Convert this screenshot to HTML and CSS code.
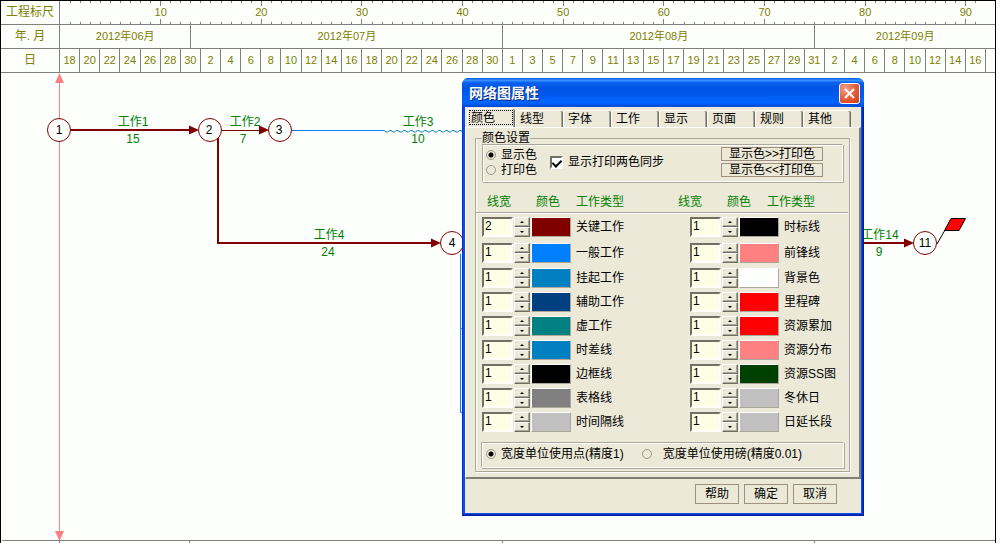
FILE: index.html
```html
<!DOCTYPE html>
<html lang="zh-CN">
<head>
<meta charset="utf-8">
<title>网络图属性</title>
<link rel="stylesheet" href="styles.css">
</head>
<body>
<main class="sheet">
  <header class="scale">
    <div class="scale-name">工程标尺</div>
    <svg class="ruler" id="ruler" role="img" aria-label="工程标尺"></svg>
    <div class="scale-name">年. 月</div>
    <div class="months"><span>2012年06月</span><span>2012年07月</span><span>2012年08月</span><span>2012年09月</span></div>
    <div class="scale-name">日</div>
    <div class="days" id="days"></div>
  </header>

  <svg class="network" width="994" height="467" viewBox="1 73 994 467">
    <g class="front-line">
      <path d="M59.5 80V533"/>
      <path class="front-head" d="M59.5 73L64 83H55zM59.5 541L55 531H64z"/>
    </g>
    <path class="link" d="M292 130.500H384M460.500 254V412.500H464M460.500 328.500H464"/>
    <path class="slack" id="slack"/>
    <g class="critical">
      <path d="M71 130H190M218 138V243H432M860 243H906"/>
      <path class="thin" d="M222 130.500H262"/>
      <path class="head" d="M189 125.500L199 130L189 134.500zM259 125.500L269 130L259 134.500zM431 238.500L441 243L431 247.500zM904 238.500L914 243L904 247.500z"/>
    </g>
    <g class="milestone">
      <path d="M937 244L945 230"/>
      <path class="flag" d="M951 218.500H965.500L959 230.500H944.500z"/>
    </g>
    <g class="node">
      <circle cx="59" cy="130" r="11.500"/><circle cx="210" cy="130" r="11.500"/><circle cx="280" cy="130" r="11.500"/><circle cx="452" cy="243" r="11.500"/><circle cx="925" cy="243" r="11.500"/>
      <text x="59" y="134">1</text><text x="209" y="134">2</text><text x="279" y="134">3</text><text x="452" y="247">4</text><text x="925" y="247">11</text>
    </g>
    <g class="task">
      <text x="133" y="126">工作1</text><text x="133" y="143">15</text>
      <text x="245" y="126">工作2</text><text x="243" y="143">7</text>
      <text x="418" y="126">工作3</text><text x="418" y="143">10</text>
      <text x="329" y="239">工作4</text><text x="328" y="256">24</text>
      <text x="880" y="239">工作14</text><text x="879" y="256">9</text>
    </g>
  </svg>
  <div class="months scale-foot"><span></span><span></span><span></span><span></span></div>
</main>

<section class="dialog" role="dialog" aria-labelledby="dialog-title">
  <div class="titlebar">
    <h1 id="dialog-title">网络图属性</h1>
    <button class="close" type="button" aria-label="关闭"><svg width="11" height="11" viewBox="0 0 11 11"><path d="M1 1L10 10M10 1L1 10"/></svg></button>
  </div>
  <form class="body">
    <div class="tabs" role="tablist">
      <button type="button" role="tab" class="tab active" aria-selected="true">颜色</button>
      <button type="button" role="tab" class="tab">线型</button>
      <button type="button" role="tab" class="tab">字体</button>
      <button type="button" role="tab" class="tab">工作</button>
      <button type="button" role="tab" class="tab">显示</button>
      <button type="button" role="tab" class="tab">页面</button>
      <button type="button" role="tab" class="tab">规则</button>
      <button type="button" role="tab" class="tab">其他</button>
    </div>
    <div class="panel">
      <fieldset class="group">
        <legend>颜色设置</legend>
        <div class="box modes">
          <div class="stack">
            <label><input type="radio" name="mode" checked>显示色</label>
            <label><input type="radio" name="mode">打印色</label>
          </div>
          <label class="sync"><input type="checkbox" checked>显示打印两色同步</label>
          <div class="copy">
            <button type="button" class="flat">显示色&gt;&gt;打印色</button>
            <button type="button" class="flat">显示色&lt;&lt;打印色</button>
          </div>
        </div>
        <div class="heads">
          <div class="head-set"><span>线宽</span><span>颜色</span><span>工作类型</span></div>
          <div class="head-set"><span>线宽</span><span>颜色</span><span>工作类型</span></div>
        </div>
        <div class="lists">
          <div class="list" id="work-lines"></div>
          <div class="list" id="other-lines"></div>
        </div>
        <div class="box units">
          <label><input type="radio" name="unit" checked>宽度单位使用点(精度1)</label>
          <label><input type="radio" name="unit">宽度单位使用磅(精度0.01)</label>
        </div>
      </fieldset>
    </div>
    <div class="actions">
      <button type="button" class="flat">帮助</button>
      <button type="button" class="flat">确定</button>
      <button type="button" class="flat">取消</button>
    </div>
  </form>
</section>
<script src="app.js"></script>
</body>
</html>
```
FILE: styles.css
```css
* { box-sizing: border-box; }

body {
  margin: 0;
  background: #fcfffc;
  font: 12px/14px "Liberation Sans", "Noto Sans CJK SC", sans-serif;
  color: #000;
}

button, input {
  font: inherit;
  color: inherit;
  margin: 0;
  padding: 0;
}

.sheet {
  min-height: 100vh;
  margin-right: 4px;
  border: solid #000;
  border-width: 1px 1px 0 1px;
  display: flex;
  flex-direction: column;
  overflow: hidden;
}

/* time scale */
.scale {
  display: grid;
  grid-template-columns: 59px 1fr;
  grid-auto-rows: 24px;
  color: #808000;
}

.scale > * { border-bottom: 1px solid #808080; }

.scale-name {
  border-right: 1px solid #808080;
  line-height: 22px;
  text-align: center;
}

.ruler {
  width: 100%;
  height: 24px;
  shape-rendering: crispEdges;
}

.ruler line { stroke: #808080; }

.ruler text {
  fill: #808000;
  text-anchor: middle;
  font-size: 11px;
}

.months {
  display: grid;
  grid-template-columns: 1295fr 3100fr 3100fr 1795fr;
  font-size: 11px;
  line-height: 23px;
  text-align: center;
}

.months span + span { border-left: 1px solid #808080; }

.days {
  display: grid;
  grid-template-columns: repeat(46, 200fr) 90fr;
  font-size: 11px;
  line-height: 23px;
  text-align: center;
}

.days span { border-right: 1px solid #808080; }
.days span:last-child { border-right: 0; }

.scale-foot {
  flex: 1;
  margin-left: 58px;
  border-top: 1px solid #808080;
  box-shadow: -58px -1px 0 -1px #808080;
}

.scale-foot span { border-left: 1px solid #808080; }

/* network drawing */
.network {
  display: block;
  flex: none;
}

.network path, .network circle { fill: none; }
.network text { text-anchor: middle; }
.network .front-line path { stroke: #ff8080; }
.network .front-line .front-head { fill: #ff8080; stroke: none; }
.network .link { stroke: #0080ff; }
.network .slack { stroke: #0080c0; }
.network .critical path { stroke: #800000; stroke-width: 2; }
.network .critical .thin { stroke-width: 1; }
.network .critical .head { fill: #800000; stroke: none; }
.network .milestone path { stroke: #000; }
.network .milestone .flag { fill: #f00; }
.network .node circle { fill: #fcfffc; stroke: #800000; }
.network .task text { fill: #008000; }

/* dialog */
.dialog {
  position: absolute;
  left: 462px;
  top: 78px;
  width: 402px;
  padding: 0 3px 3px;
  border-radius: 7px 7px 0 0;
  background: #0a4ee4;
  box-shadow: inset 1px 0 0 #0030c8, inset -1px -1px 0 #001ea0, inset -2px -2px 0 #0030c8;
}

.titlebar {
  height: 29px;
  margin: 0 -3px;
  padding: 1px 4px 0 7px;
  display: flex;
  align-items: center;
  justify-content: space-between;
  border-radius: 7px 7px 0 0;
  background: linear-gradient(#0058e6, #3a93ff 8%, #0860ee 16%, #0054e3 35%, #0058ee 55%, #0066ff 85%, #0048d0);
}

.titlebar h1 {
  margin: 0;
  font-size: 14px;
  line-height: 18px;
  color: #fff;
  text-shadow: 1px 1px 0 #0a2a80;
}

.close {
  display: grid;
  place-items: center;
  width: 21px;
  height: 21px;
  border: 1px solid #fff;
  border-radius: 3px;
  background: radial-gradient(circle at 30% 25%, #f0a088, #e25c36 55%, #c83c10);
}

.close path {
  stroke: #fff;
  stroke-width: 2;
}

.body {
  padding-top: 3px;
  background: #ece9d8;
}

.tabs {
  display: flex;
  height: 17px;
  padding-left: 2px;
}

.tab {
  flex: 0 0 48px;
  padding-left: 4px;
  border: solid #fff;
  border-width: 1px 0 0 1px;
  border-radius: 2px 2px 0 0;
  box-shadow: inset -1px 0 0 #716f64, inset -2px 0 0 #aca899;
  background: #ece9d8;
  line-height: 14px;
  text-align: left;
}

.tab.active {
  height: 19px;
  margin-top: -2px;
  padding-left: 3px;
  outline: 1px dotted #000;
  outline-offset: -3px;
}

.panel {
  padding: 4px 9px 5px;
  border: solid;
  border-width: 1px 2px 2px 1px;
  border-color: #fff #808076 #808076 #fff;
}

.group {
  min-width: 0;
  margin: 0;
  padding: 0;
  border: 1px solid #aca899;
  box-shadow: 1px 1px 0 #fff, inset 1px 0 0 #fff;
}

.group legend {
  margin-left: 6px;
  padding: 0;
  line-height: 12px;
}

.box {
  margin: 0 6px;
  border: 1px solid;
  border-color: #aca899 #fff #fff #aca899;
  box-shadow: inset 1px 1px 0 #fff, 1px 1px 0 #aca899;
}

.box label {
  display: flex;
  align-items: center;
  white-space: nowrap;
}

.modes {
  display: flex;
  align-items: center;
  height: 38px;
  padding: 0 19px 2px 3px;
}

.stack label {
  height: 15px;
  gap: 5px;
}

.sync {
  gap: 5px;
  margin-left: 13px;
}

.copy {
  display: grid;
  gap: 2px;
  width: 102px;
  margin-left: auto;
}

input[type="radio"] {
  appearance: none;
  width: 10px;
  height: 10px;
  border: 1px solid #a09888;
  border-radius: 50%;
}

input[type="radio"]:checked { background: radial-gradient(circle, #000 2px, transparent 3px); }

input[type="checkbox"] {
  appearance: none;
  width: 13px;
  height: 13px;
  border: 2px solid;
  border-color: #716f64 #fff #fff #716f64;
  background: #fff;
  display: grid;
  place-items: center;
}

input[type="checkbox"]:checked::after {
  content: "";
  width: 4px;
  height: 7px;
  border: solid #000;
  border-width: 0 2px 2px 0;
  transform: rotate(45deg);
}

.flat {
  height: 14px;
  border: 1px solid #a09080;
  background: #ece9d8;
  line-height: 12px;
  white-space: nowrap;
}

.heads {
  display: grid;
  grid-template-columns: 191px 1fr;
  margin-right: 1px;
  padding: 12px 0 2px 11px;
  border-bottom: 1px solid #aca899;
  box-shadow: 0 1px 0 #fff;
  color: #008000;
  line-height: 16px;
}

.head-set {
  display: grid;
  grid-template-columns: 49px 40px 1fr;
}

.lists {
  display: grid;
  grid-template-columns: 208px 1fr;
  padding: 1px 0 0 6px;
}

.list {
  display: grid;
  grid-template-rows: 26px 26px;
  grid-auto-rows: 24px;
}

.line {
  display: grid;
  grid-template-columns: 31px 16px 40px 1fr;
  align-items: center;
  column-gap: 1px;
}

.line .width {
  width: 100%;
  height: 20px;
  padding: 0 0 2px 1px;
  border: 2px solid;
  border-color: #716f64 #fff #fff #716f64;
  border-radius: 0;
  background: #fcffe4;
}

.spin {
  display: grid;
  grid-template-rows: 10px 10px;
}

.spin button {
  display: grid;
  place-items: center;
  border: 1px solid;
  border-color: #fff #716f64 #716f64 #fff;
  box-shadow: inset -1px -1px 0 #aca899;
  background: #ece9d8;
}

.spin svg { display: block; }

.swatch {
  width: 40px;
  height: 20px;
  border: 1px solid;
  border-color: #fff #aca899 #aca899 #fff;
}

.line label {
  padding-left: 4px;
  white-space: nowrap;
}

.units {
  display: flex;
  align-items: center;
  gap: 18px;
  height: 26px;
  margin: 8px 5px 3px;
  padding: 0 0 2px 4px;
}

.units label { gap: 5px; }
.units label + label { gap: 11px; }

.actions {
  display: flex;
  justify-content: flex-end;
  gap: 5px;
  padding: 5px 24px 9px;
}

.actions .flat {
  width: 44px;
  height: 20px;
  line-height: 18px;
}
```
FILE: app.js
```js
const svgNS = "http://www.w3.org/2000/svg";
const DAYS = 92.9;

// Ruler: one tick a day on both edges, a longer one with a number every ten days.
const ruler = document.getElementById("ruler");
for (let day = 1; day <= 91; day++) {
  const x = (day / DAYS * 100) + "%";
  const size = day % 10 ? 2 : 5;
  for (const [y1, y2] of [[0, size], [23 - size, 23]]) {
    const tick = document.createElementNS(svgNS, "line");
    tick.setAttribute("x1", x);
    tick.setAttribute("x2", x);
    tick.setAttribute("y1", y1);
    tick.setAttribute("y2", y2);
    ruler.append(tick);
  }
  if (day % 10 === 0) {
    const label = document.createElementNS(svgNS, "text");
    label.setAttribute("x", x);
    label.setAttribute("y", 15);
    label.textContent = day;
    ruler.append(label);
  }
}

// Every second date from 18 June to 16 September.
const days = document.getElementById("days");
for (const [first, last] of [[18, 30], [2, 30], [1, 31], [2, 16]]) {
  for (let d = first; d <= last; d += 2) {
    const cell = document.createElement("span");
    cell.textContent = d;
    days.append(cell);
  }
}
days.append(document.createElement("span"));

// Wavy line for free float.
let wave = "M384 130.5";
for (let x = 384; x < 464; x += 7) wave += "l2 1.5h1.5l2 -1.5h1.5";
document.getElementById("slack").setAttribute("d", wave);

const workLines = [
  ["关键工作", 2, "#800000"], ["一般工作", 1, "#0080ff"], ["挂起工作", 1, "#0080c0"],
  ["辅助工作", 1, "#004080"], ["虚工作", 1, "#008080"], ["时差线", 1, "#0080c0"],
  ["边框线", 1, "#000000"], ["表格线", 1, "#808080"], ["时间隔线", 1, "#c0c0c0"]
];
const otherLines = [
  ["时标线", 1, "#000000"], ["前锋线", 1, "#ff8080"], ["背景色", 1, "#fcfffc"],
  ["里程碑", 1, "#ff0000"], ["资源累加", 1, "#ff0000"], ["资源分布", 1, "#ff8080"],
  ["资源SS图", 1, "#004000"], ["冬休日", 1, "#c0c0c0"], ["日延长段", 1, "#c0c0c0"]
];

function fill(listId, rows) {
  document.getElementById(listId).innerHTML = rows.map(([name, width, color], i) => `
    <div class="line">
      <input class="width" type="text" id="${listId}-${i}" value="${width}">
      <span class="spin">
        <button type="button" aria-label="增加"><svg width="4" height="2" viewBox="0 0 4 2"><path d="M0 2L2 0L4 2z"/></svg></button>
        <button type="button" aria-label="减少"><svg width="4" height="2" viewBox="0 0 4 2"><path d="M0 0L2 2L4 0z"/></svg></button>
      </span>
      <span class="swatch" style="background:${color}"></span>
      <label for="${listId}-${i}">${name}</label>
    </div>`).join("");
}
fill("work-lines", workLines);
fill("other-lines", otherLines);
```
